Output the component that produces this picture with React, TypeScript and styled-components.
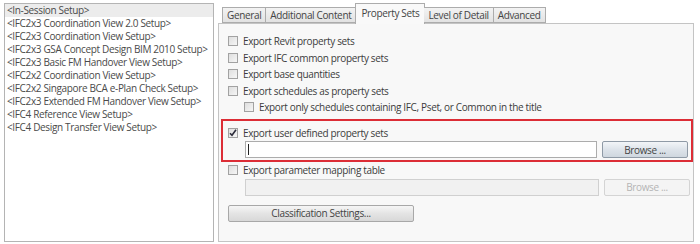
import React from 'react';
import styled, { createGlobalStyle } from 'styled-components';

const GlobalStyle = createGlobalStyle`
  html, body {
    margin: 0;
    padding: 0;
    background: #fff;
  }
  body {
    font-family: "Open Sans", "Noto Sans", sans-serif;
    font-size: 10px;
    letter-spacing: -0.35px;
    color: #3a3a3a;
  }
`;

const Wrapper = styled.div`
  width: 700px;
  height: 244px;
  display: flex;
  padding: 3px 0 0 4px;
  box-sizing: border-box;
  gap: 4px;
`;

const SetupList = styled.ul`
  list-style: none;
  margin: 0;
  padding: 0;
  width: 210px;
  height: 239px;
  box-sizing: border-box;
  border: 1px solid #b4b4b4;
  background: #fff;
`;

const SetupItem = styled.li<{ $selected?: boolean }>`
  height: 13px;
  line-height: 13px;
  padding-left: 2px;
  white-space: nowrap;
  color: #4a4a4a;
  background: ${p => (p.$selected ? '#ececec' : 'transparent')};
`;

const RightSide = styled.div`
  width: 476px;
  display: flex;
  flex-direction: column;
`;

const TabStrip = styled.div`
  display: flex;
  align-items: flex-end;
  height: 20px;
  padding-left: 4px;
  position: relative;
  z-index: 1;
`;

const Tab = styled.div<{ $active?: boolean }>`
  box-sizing: border-box;
  height: ${p => (p.$active ? '21px' : '16px')};
  margin: ${p => (p.$active ? '0 -1px -1px' : '0')};
  padding: 0 ${p => (p.$active ? 5 : 4)}px;
  line-height: ${p => (p.$active ? '19px' : '14px')};
  border: 1px solid #acacac;
  border-bottom: ${p => (p.$active ? 'none' : '1px solid #acacac')};
  border-left: ${p => (p.$active ? '1px solid #acacac' : 'none')};
  background: ${p => (p.$active ? '#f9f9f9' : 'linear-gradient(#f3f3f3, #e2e2e2)')};
  color: #444;
  white-space: nowrap;
  &:first-child {
    border-left: 1px solid #acacac;
  }
`;

const Panel = styled.div`
  flex: 1;
  box-sizing: border-box;
  margin-bottom: 2px;
  border: 1px solid #c4c4c4;
  background: #f8f8f8;
  padding-top: 9px;
  display: flex;
  flex-direction: column;
`;

const CheckRow = styled.label<{ $indent?: number }>`
  display: flex;
  align-items: center;
  height: 16.5px;
  margin-left: ${p => p.$indent ?? 9}px;
  gap: 5px;
  color: #3c3c3c;
  white-space: nowrap;
`;

const Box = styled.span<{ $checked?: boolean }>`
  box-sizing: border-box;
  width: 10px;
  height: 10px;
  border: 1px solid #a2a2a2;
  background: linear-gradient(135deg, #dedede, #f6f6f6);
  display: flex;
  align-items: center;
  justify-content: center;
`;

const Highlight = styled.div`
  margin: 3px 0 0 2px;
  border: 2px solid #dc2d36;
  padding: 4px 2px 2px 5px;
  display: flex;
  flex-direction: column;
`;

const FieldRow = styled.div<{ $indent: number }>`
  display: flex;
  gap: 5px;
  height: 17px;
  margin-left: ${p => p.$indent}px;
  margin-right: ${p => (p.$indent > 20 ? 3 : 1)}px;
`;

const TextField = styled.div<{ $disabled?: boolean }>`
  flex: 1;
  box-sizing: border-box;
  border: 1px solid ${p => (p.$disabled ? '#d0d0d0' : '#acacac')};
  background: ${p => (p.$disabled ? '#f1f1f1' : '#fff')};
  display: flex;
  align-items: center;
  padding-left: 2px;
`;

const Caret = styled.span`
  width: 1px;
  height: 11px;
  background: #222;
`;

const Button = styled.div<{ $disabled?: boolean; $width: number }>`
  box-sizing: border-box;
  width: ${p => p.$width}px;
  height: 17px;
  border: 1px solid ${p => (p.$disabled ? '#d4d4d4' : '#8f9aa6')};
  border-radius: 2px;
  background: ${p =>
    p.$disabled ? '#f4f4f4' : 'linear-gradient(#f2f5f8, #dde3ea 50%, #cfd7df)'};
  color: ${p => (p.$disabled ? '#b4b4b4' : '#444')};
  display: flex;
  align-items: center;
  justify-content: center;
`;

const GreyButton = styled(Button)`
  border-color: #a8a8a8;
  background: linear-gradient(#f6f6f6, #e4e4e4 50%, #d8d8d8);
  margin: 9px 0 0 9px;
`;

function CheckMark() {
  return (
    <svg width="8" height="8" viewBox="0 0 8 8">
      <path d="M1 4.2 L3 6.3 L7 0.8" fill="none" stroke="#2b2b3a" strokeWidth="1.6" />
    </svg>
  );
}

function Check({ checked, label, indent }: { checked?: boolean; label: string; indent?: number }) {
  return (
    <CheckRow $indent={indent}>
      <Box $checked={checked}>{checked && <CheckMark />}</Box>
      <span>{label}</span>
    </CheckRow>
  );
}

const setups = [
  '<In-Session Setup>',
  '<IFC2x3 Coordination View 2.0 Setup>',
  '<IFC2x3 Coordination View Setup>',
  '<IFC2x3 GSA Concept Design BIM 2010 Setup>',
  '<IFC2x3 Basic FM Handover View Setup>',
  '<IFC2x2 Coordination View Setup>',
  '<IFC2x2 Singapore BCA e-Plan Check Setup>',
  '<IFC2x3 Extended FM Handover View Setup>',
  '<IFC4 Reference View Setup>',
  '<IFC4 Design Transfer View Setup>',
];

const tabs = ['General', 'Additional Content', 'Property Sets', 'Level of Detail', 'Advanced'];

export default function App() {
  return (
    <>
      <GlobalStyle />
      <Wrapper>
        <SetupList>
          {setups.map((s, i) => (
            <SetupItem key={s} $selected={i === 0}>
              {s}
            </SetupItem>
          ))}
        </SetupList>
        <RightSide>
          <TabStrip>
            {tabs.map(t => (
              <Tab key={t} $active={t === 'Property Sets'}>
                {t}
              </Tab>
            ))}
          </TabStrip>
          <Panel>
            <Check label="Export Revit property sets" />
            <Check label="Export IFC common property sets" />
            <Check label="Export base quantities" />
            <Check label="Export schedules as property sets" />
            <Check indent={25} label="Export only schedules containing IFC, Pset, or Common in the title" />
            <Highlight>
              <Check checked indent={0} label="Export user defined property sets" />
              <FieldRow $indent={17}>
                <TextField>
                  <Caret />
                </TextField>
                <Button $width={86}>Browse ...</Button>
              </FieldRow>
            </Highlight>
            <Check label="Export parameter mapping table" />
            <FieldRow $indent={26}>
              <TextField $disabled />
              <Button $disabled $width={86}>
                Browse ...
              </Button>
            </FieldRow>
            <GreyButton $width={186}>Classification Settings...</GreyButton>
          </Panel>
        </RightSide>
      </Wrapper>
    </>
  );
}
